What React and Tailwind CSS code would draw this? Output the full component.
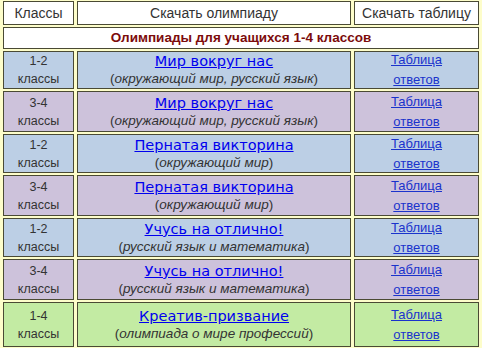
import React from "react";

const rows = [
  { grade: "1-2", title: "Мир вокруг нас", sub: "окружающий мир, русский язык", bg: "bg-[#bccfe5]", h: "h-[38px]" },
  { grade: "3-4", title: "Мир вокруг нас", sub: "окружающий мир, русский язык", bg: "bg-[#cdc2db]", h: "h-[41px]" },
  { grade: "1-2", title: "Пернатая викторина", sub: "окружающий мир", bg: "bg-[#bccfe5]", h: "h-[39px]" },
  { grade: "3-4", title: "Пернатая викторина", sub: "окружающий мир", bg: "bg-[#cdc2db]", h: "h-[41px]" },
  { grade: "1-2", title: "Учусь на отлично!", sub: "русский язык и математика", bg: "bg-[#bccfe5]", h: "h-[39px]" },
  { grade: "3-4", title: "Учусь на отлично!", sub: "русский язык и математика", bg: "bg-[#cdc2db]", h: "h-[41px]" },
  { grade: "1-4", title: "Креатив-призвание", sub: "олимпиада о мире профессий", bg: "bg-[#c3eba3]", h: "h-[45px]" },
];

const cell = "border border-[#4a4a34] text-center align-middle";

export default function App() {
  return (
    <div className="w-[482px] h-[348px] overflow-hidden bg-[#fdfdca] font-['Liberation_Sans',Arial,sans-serif] text-[13px] text-[#333]">
      <table className="-mt-px border-separate border-spacing-x-[3px] border-spacing-y-[2px] w-[482px] table-fixed">
        <colgroup>
          <col className="w-[71px]" />
          <col className="w-[274px]" />
          <col className="w-[125px]" />
        </colgroup>
        <tbody>
          <tr className="h-[24px]">
            <td className={`${cell} bg-white text-[14px]`}>Классы</td>
            <td className={`${cell} bg-white text-[14px]`}>Скачать олимпиаду</td>
            <td className={`${cell} bg-white text-[14px]`}>Скачать таблицу</td>
          </tr>
          <tr className="h-[22px]">
            <td colSpan={3} className={`${cell} bg-white font-bold text-[13.5px] text-[#7c0b0b]`}>
              Олимпиады для учащихся 1-4 классов
            </td>
          </tr>
          {rows.map((r, i) => (
            <tr key={i} className={r.h}>
              <td className={`${cell} ${r.bg} text-[12.5px] leading-[18px]`}>
                <div>{r.grade}</div>
                <div>классы</div>
              </td>
              <td className={`${cell} ${r.bg}`}>
                <div className="h-[18px] leading-[18px]">
                  <a href="#" className="font-['DejaVu_Sans',sans-serif] text-[14.5px] text-[#0000ee] underline">
                    {r.title}
                  </a>
                </div>
                <div className="h-[18px] leading-[18px] text-[13.5px]">
                  (<i>{r.sub}</i>)
                </div>
              </td>
              <td className={`${cell} ${r.bg}`}>
                <div className="-my-[2px] leading-[20px]">
                  <div>
                    <a href="#" className="text-[#1a33cc] underline">Таблица</a>
                  </div>
                  <div>
                    <a href="#" className="text-[#1a33cc] underline">ответов</a>
                  </div>
                </div>
              </td>
            </tr>
          ))}
        </tbody>
      </table>
    </div>
  );
}
